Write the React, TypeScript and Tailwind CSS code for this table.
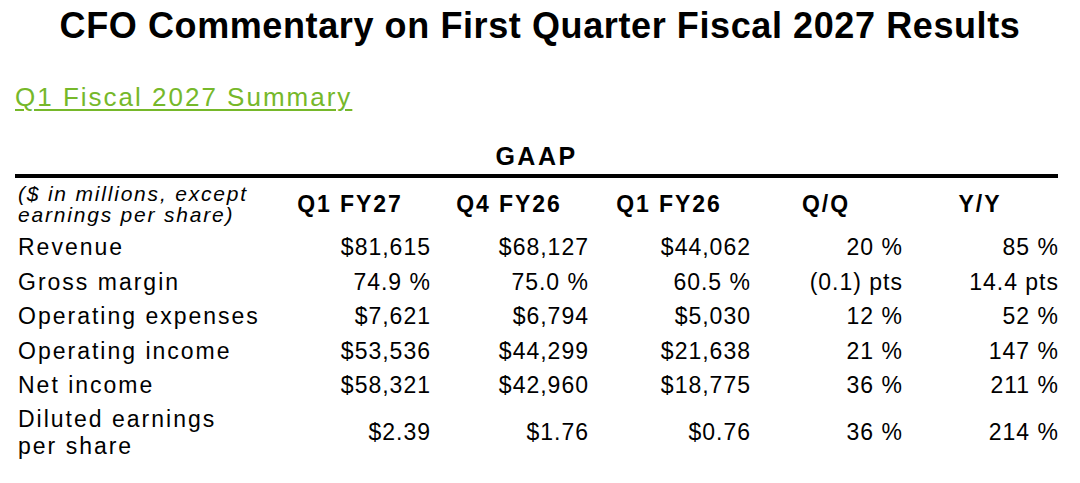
const rows: { label: string[]; values: string[] }[] = [
  { label: ["Revenue"], values: ["$81,615", "$68,127", "$44,062", "20 %", "85 %"] },
  { label: ["Gross margin"], values: ["74.9 %", "75.0 %", "60.5 %", "(0.1) pts", "14.4 pts"] },
  { label: ["Operating expenses"], values: ["$7,621", "$6,794", "$5,030", "12 %", "52 %"] },
  { label: ["Operating income"], values: ["$53,536", "$44,299", "$21,638", "21 %", "147 %"] },
  { label: ["Net income"], values: ["$58,321", "$42,960", "$18,775", "36 %", "211 %"] },
  { label: ["Diluted earnings", "per share"], values: ["$2.39", "$1.76", "$0.76", "36 %", "214 %"] },
]

const headers = ["Q1 FY27", "Q4 FY26", "Q1 FY26", "Q/Q", "Y/Y"]

const cols = "grid grid-cols-[255px_160px_158px_162px_152px_156px]"

export default function App() {
  return (
    <div className="w-[1080px] h-[483px] bg-white text-black font-['Liberation_Sans',Arial,sans-serif] overflow-hidden">
      <h1 className="text-center text-[36px] font-bold leading-none tracking-[0.6px] pt-[8px]">
        CFO Commentary on First Quarter Fiscal 2027 Results
      </h1>

      <div className="pl-[15px] pr-[22px]">
        <a className="inline-block mt-[40px] text-[26px] leading-none tracking-[2px] text-[#76b82a] underline underline-offset-[3px] decoration-2">
          Q1 Fiscal 2027 Summary
        </a>

        <div className="text-center text-[25px] font-bold leading-none tracking-[2.5px] mt-[31px]">GAAP</div>
        <div className="h-[4px] bg-black mt-[5px]" />

        {/* header row */}
        <div className={`${cols} items-center mt-[5px]`}>
          <div className="text-[21px] italic leading-[21px] tracking-[1.8px] pl-[3px]">
            ($ in millions, except
            <br />
            earnings per share)
          </div>
          {headers.map((h) => (
            <div key={h} className="text-center text-[23px] font-bold tracking-[1.9px]">{h}</div>
          ))}
        </div>

        {/* data rows */}
        <div className="mt-[5px] text-[23px]">
          {rows.map((r) => (
            <div key={r.label[0]} className={`${cols} items-center ${r.label.length > 1 ? "leading-[27px] mt-[3px]" : "leading-[34.5px]"}`}>
              <div className="pl-[3px] tracking-[2px]">
                {r.label.map((l) => (
                  <div key={l}>{l}</div>
                ))}
              </div>
              {r.values.map((v, i) => (
                <div key={i} className="text-right tracking-[1px] -mr-[1px]">{v}</div>
              ))}
            </div>
          ))}
        </div>
      </div>
    </div>
  )
}
